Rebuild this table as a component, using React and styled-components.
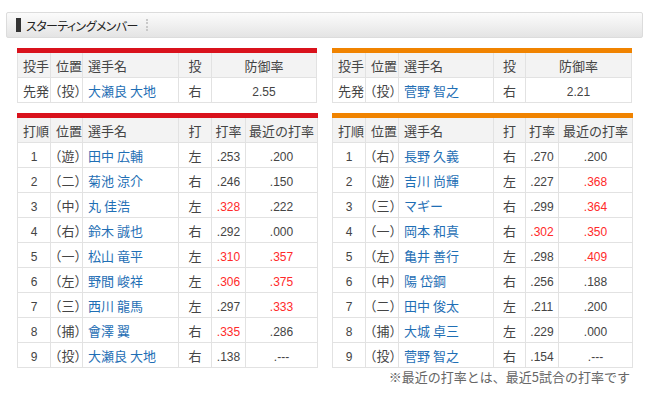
import styled, { createGlobalStyle } from "styled-components";

const GlobalStyle = createGlobalStyle`
  body {
    margin: 0;
    background: #fff;
    font-family: "Noto Sans CJK JP", "Liberation Sans", sans-serif;
    color: #333;
  }
`;

const Page = styled.div`
  width: 650px;
  padding: 12px 0 0 6px;
  box-sizing: border-box;
`;

const TitleBar = styled.div`
  width: 637px;
  height: 26px;
  box-sizing: border-box;
  border: 1px solid #dcdcdc;
  border-radius: 2px;
  background: linear-gradient(#fbfbfb, #f0f0f0 50%, #e4e4e4);
  display: flex;
  align-items: center;
  padding-left: 9px;
  gap: 5px;
`;

const TitleMark = styled.span`
  width: 5px;
  height: 14px;
  background: #333;
`;

const TitleText = styled.span`
  font-size: 12px;
  color: #222;
  font-feature-settings: "palt";
  letter-spacing: -0.6px;
`;

const TitleDots = styled.span`
  width: 0;
  height: 12px;
  border-left: 2px dotted #c8c8c8;
  margin-left: 3px;
`;

const Grid = styled.div`
  display: grid;
  grid-template-columns: 300px 300px;
  column-gap: 15px;
  row-gap: 10px;
  margin: 10px 0 0 11px;
`;

const Table = styled.table`
  width: 300px;
  table-layout: fixed;
  border-collapse: collapse;
  border-top: 5px solid ${(p) => p.$accent};
  font-size: 13px;
`;

const Th = styled.th`
  height: 24px;
  padding: 0;
  padding-left: ${(p) => (p.$align === "left" ? "5px" : "0")};
  border: 1px solid #e2e2e2;
  border-top: none;
  background: #f3f3f3;
  font-weight: normal;
  text-align: ${(p) => p.$align || "center"};
  color: #444;
  white-space: nowrap;
`;

const Td = styled.td`
  height: 24px;
  padding: 0;
  padding-left: ${(p) => (p.$align === "left" ? "5px" : "0")};
  border: 1px solid #e2e2e2;
  text-align: ${(p) => p.$align || "center"};
  white-space: nowrap;
  color: #444;
`;

const Num = styled.span`
  font-family: "Liberation Sans", sans-serif;
  font-size: 12px;
  color: ${(p) => (p.$hot ? "#ff2a2a" : "#444")};
`;

const Pos = styled.span`
  font-feature-settings: "halt";
  margin-left: -1px;
`;

const Name = styled.span`
  color: #1f6fb5;
`;

const Note = styled.div`
  grid-column: 1 / span 2;
  text-align: right;
  font-size: 13px;
  color: #666;
  margin-top: -11px;
  padding-right: 2px;
`;

const teams = [
  {
    accent: "#d9121c",
    pitcher: { name: "大瀬良 大地", hand: "右", era: "2.55" },
    cols: [33, 32, 96, 33, 34, 72],
    lineup: [
      ["1", "遊", "田中 広輔", "左", ".253", false, ".200", false],
      ["2", "二", "菊池 涼介", "右", ".246", false, ".150", false],
      ["3", "中", "丸 佳浩", "左", ".328", true, ".222", false],
      ["4", "右", "鈴木 誠也", "右", ".292", false, ".000", false],
      ["5", "一", "松山 竜平", "左", ".310", true, ".357", true],
      ["6", "左", "野間 峻祥", "左", ".306", true, ".375", true],
      ["7", "三", "西川 龍馬", "左", ".297", false, ".333", true],
      ["8", "捕", "會澤 翼", "右", ".335", true, ".286", false],
      ["9", "投", "大瀬良 大地", "右", ".138", false, ".---", false],
    ],
  },
  {
    accent: "#f08300",
    pitcher: { name: "菅野 智之", hand: "右", era: "2.21" },
    cols: [33, 33, 95, 32, 33, 74],
    lineup: [
      ["1", "右", "長野 久義", "右", ".270", false, ".200", false],
      ["2", "遊", "吉川 尚輝", "左", ".227", false, ".368", true],
      ["3", "三", "マギー", "右", ".299", false, ".364", true],
      ["4", "一", "岡本 和真", "右", ".302", true, ".350", true],
      ["5", "左", "亀井 善行", "左", ".298", false, ".409", true],
      ["6", "中", "陽 岱鋼", "右", ".256", false, ".188", false],
      ["7", "二", "田中 俊太", "左", ".211", false, ".200", false],
      ["8", "捕", "大城 卓三", "左", ".229", false, ".000", false],
      ["9", "投", "菅野 智之", "右", ".154", false, ".---", false],
    ],
  },
];

const PitcherTable = ({ team }) => (
  <Table $accent={team.accent}>
    <colgroup>
      <col style={{ width: team.cols[0] }} />
      <col style={{ width: team.cols[1] }} />
      <col style={{ width: team.cols[2] }} />
      <col style={{ width: team.cols[3] }} />
      <col />
    </colgroup>
    <thead>
      <tr>
        <Th $align="left">投手</Th>
        <Th $align="left">位置</Th>
        <Th $align="left">選手名</Th>
        <Th>投</Th>
        <Th>防御率</Th>
      </tr>
    </thead>
    <tbody>
      <tr>
        <Td $align="left">先発</Td>
        <Td $align="left">
          <Pos>（投）</Pos>
        </Td>
        <Td $align="left">
          <Name>{team.pitcher.name}</Name>
        </Td>
        <Td>{team.pitcher.hand}</Td>
        <Td>
          <Num>{team.pitcher.era}</Num>
        </Td>
      </tr>
    </tbody>
  </Table>
);

const LineupTable = ({ team }) => (
  <Table $accent={team.accent}>
    <colgroup>
      {team.cols.map((w, i) => (
        <col key={i} style={{ width: w }} />
      ))}
    </colgroup>
    <thead>
      <tr>
        <Th $align="left">打順</Th>
        <Th $align="left">位置</Th>
        <Th $align="left">選手名</Th>
        <Th>打</Th>
        <Th>打率</Th>
        <Th>最近の打率</Th>
      </tr>
    </thead>
    <tbody>
      {team.lineup.map(([order, pos, name, hand, avg, avgHot, recent, recentHot]) => (
        <tr key={order}>
          <Td>
            <Num>{order}</Num>
          </Td>
          <Td $align="left">
            <Pos>（{pos}）</Pos>
          </Td>
          <Td $align="left">
            <Name>{name}</Name>
          </Td>
          <Td>{hand}</Td>
          <Td>
            <Num $hot={avgHot}>{avg}</Num>
          </Td>
          <Td>
            <Num $hot={recentHot}>{recent}</Num>
          </Td>
        </tr>
      ))}
    </tbody>
  </Table>
);

export default function App() {
  return (
    <Page>
      <GlobalStyle />
      <TitleBar>
        <TitleMark />
        <TitleText>スターティングメンバー</TitleText>
        <TitleDots />
      </TitleBar>
      <Grid>
        {teams.map((t, i) => (
          <PitcherTable key={i} team={t} />
        ))}
        {teams.map((t, i) => (
          <LineupTable key={i} team={t} />
        ))}
        <Note>※最近の打率とは、最近5試合の打率です</Note>
      </Grid>
    </Page>
  );
}
